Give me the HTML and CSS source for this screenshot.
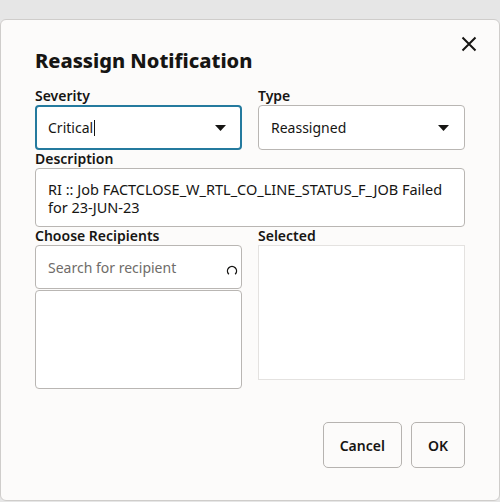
FILE: index.html
```html
<!DOCTYPE html>
<html lang="en">
<head>
<meta charset="utf-8">
<title>Reassign Notification</title>
<link rel="stylesheet" href="styles.css">
</head>
<body>
<div class="dialog">
  <div class="header">
    <h1 class="title">Reassign Notification</h1>
    <button class="close" aria-label="Close">
      <svg width="16" height="16" viewBox="0 0 16 16"><path d="M1.5 1.5 L14.5 14.5 M14.5 1.5 L1.5 14.5" stroke="#161513" stroke-width="2" fill="none"/></svg>
    </button>
  </div>
  <div class="form">
    <div class="field">
      <label class="label">Severity</label>
      <div class="select focused">
        <span class="value">Critical<span class="cursor"></span></span>
        <svg class="arrow" width="11" height="6" viewBox="0 0 11 6"><polygon points="0,0 11,0 5.5,6" fill="#161513"/></svg>
      </div>
    </div>
    <div class="field">
      <label class="label">Type</label>
      <div class="select">
        <span class="value">Reassigned</span>
        <svg class="arrow" width="11" height="6" viewBox="0 0 11 6"><polygon points="0,0 11,0 5.5,6" fill="#161513"/></svg>
      </div>
    </div>
    <div class="field wide">
      <label class="label">Description</label>
      <div class="textarea"><div class="line">RI :: Job FACTCLOSE_W_RTL_CO_LINE_STATUS_F_JOB Failed</div><div class="line">for 23-JUN-23</div></div>
    </div>
    <div class="field">
      <label class="label">Choose Recipients</label>
      <div class="search">
        <span class="placeholder">Search for recipient</span>
        <svg class="spinner" width="12" height="12" viewBox="0 0 12 12"><path d="M2.8 9.2 A4.5 4.5 0 1 1 9.2 9.2" stroke="#161513" stroke-width="1.4" fill="none"/></svg>
      </div>
      <div class="listbox"></div>
    </div>
    <div class="field">
      <label class="label">Selected</label>
      <div class="selected-box"></div>
    </div>
  </div>
  <div class="footer">
    <button class="btn">Cancel</button>
    <button class="btn">OK</button>
  </div>
</div>
</body>
</html>
```
FILE: styles.css
```css
html, body {
  margin: 0;
  padding: 0;
}
body {
  width: 500px;
  height: 502px;
  overflow: hidden;
  background: #e6e6e6;
  font-family: "Noto Sans", "Open Sans", sans-serif;
  color: #161513;
}
.dialog {
  margin-top: 19px;
  height: 482px;
  box-sizing: border-box;
  background: #fcfbfa;
  border: 1px solid #cfcdcb;
  border-radius: 6px;
  padding: 0 34px;
}
.header {
  display: flex;
  justify-content: space-between;
  align-items: flex-start;
}
.title {
  margin: 26.5px 0 0;
  font-size: 20px;
  line-height: 28px;
  font-weight: 800;
}
.close {
  margin: 11.5px -15.5px 0 0;
  width: 24px;
  height: 24px;
  padding: 0;
  border: 0;
  background: none;
  display: flex;
  align-items: center;
  justify-content: center;
}
.form {
  margin-top: 12.5px;
  display: grid;
  grid-template-columns: 1fr 1fr;
  column-gap: 16px;
}
.field.wide {
  grid-column: 1 / 3;
}
.label {
  display: block;
  font-size: 14px;
  line-height: 18px;
  font-weight: 600;
}
.select {
  height: 45px;
  box-sizing: border-box;
  border: 1px solid #b9b6b3;
  border-radius: 4px;
  background: #fff;
  display: flex;
  align-items: center;
  justify-content: space-between;
  padding: 0 15px 0 12px;
  font-size: 14px;
}
.select.focused {
  border: 2px solid #247a9e;
  padding: 0 14px 0 11px;
}
.value {
  display: flex;
  align-items: center;
}
.cursor {
  display: inline-block;
  width: 1px;
  height: 16px;
  background: #161513;
  margin-left: 1px;
}
.textarea {
  height: 59px;
  box-sizing: border-box;
  border: 1px solid #b9b6b3;
  border-radius: 4px;
  background: #fff;
  padding: 11px 12px 0;
  font-size: 14.5px;
  white-space: nowrap;
}
.line {
  height: 18px;
  line-height: 18px;
}
.search {
  height: 44px;
  box-sizing: border-box;
  border: 1px solid #b9b6b3;
  border-radius: 4px;
  background: #fff;
  display: flex;
  align-items: center;
  justify-content: space-between;
  padding: 0 3px 0 12px;
  font-size: 14px;
}
.placeholder {
  color: #6f6c69;
}
.spinner {
  margin-top: 8px;
}
.listbox {
  margin-top: 1px;
  height: 99px;
  box-sizing: border-box;
  border: 1px solid #b9b6b3;
  border-radius: 4px;
  background: #fff;
}
.selected-box {
  height: 135px;
  box-sizing: border-box;
  border: 1px solid #e4e2e0;
  background: #fff;
}
.footer {
  display: flex;
  justify-content: flex-end;
  gap: 9px;
  margin-top: 33px;
}
.btn {
  height: 46px;
  box-sizing: border-box;
  padding: 0 16px;
  border: 1px solid #b6b3b0;
  border-radius: 5px;
  background: #fcfbfa;
  font-family: "Noto Sans", "Open Sans", sans-serif;
  font-size: 14px;
  font-weight: 600;
  color: #161513;
}
```
